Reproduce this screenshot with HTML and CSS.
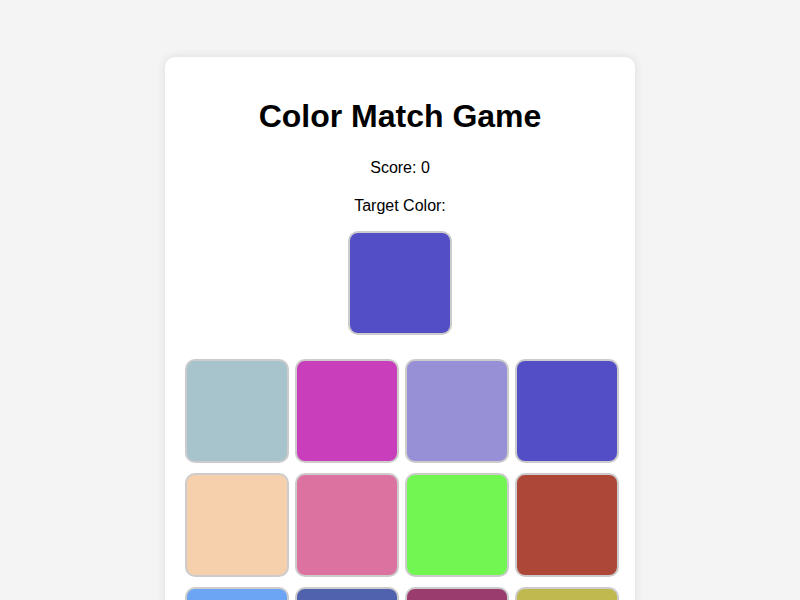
FILE: index.html
```html
<!DOCTYPE html>
<html lang="en">
<head>
    <meta charset="UTF-8">
    <meta name="viewport" content="width=device-width, initial-scale=1.0">
    <title>Color Match Game</title>
    <link rel="stylesheet" href="styles.css">
</head>
<body>
<div class="game">
    <h1>Color Match Game</h1>
    <p class="score">Score: <span id="score">0</span></p>
    <p class="label">Target Color:</p>
    <div class="target" style="background-color: #544ec6"></div>
    <div class="grid">
        <div class="tile" style="background-color: #a7c4cc"></div>
        <div class="tile" style="background-color: #c93fbb"></div>
        <div class="tile" style="background-color: #9890d6"></div>
        <div class="tile" style="background-color: #544ec6"></div>
        <div class="tile" style="background-color: #f6cfad"></div>
        <div class="tile" style="background-color: #dc72a0"></div>
        <div class="tile" style="background-color: #72f651"></div>
        <div class="tile" style="background-color: #ad4838"></div>
        <div class="tile" style="background-color: #6ca5f4"></div>
        <div class="tile" style="background-color: #5062ad"></div>
        <div class="tile" style="background-color: #9a3c6e"></div>
        <div class="tile" style="background-color: #bfb94f"></div>
    </div>
</div>
</body>
</html>
```

FILE: styles.css
```css
body {
    margin: 0;
    padding-top: 57px;
    background-color: #f4f4f4;
    font-family: 'Liberation Sans', Arial, sans-serif;
    display: flex;
    justify-content: center;
}

.game {
    width: 430px;
    padding: 20px;
    background-color: #fff;
    border-radius: 10px;
    box-shadow: 0 0 10px rgba(0, 0, 0, 0.1);
    text-align: center;
}

h1 {
    font-size: 32px;
    margin: 21px 0 24px;
}

p {
    font-size: 16px;
    margin: 0;
}

.score {
    margin-bottom: 20px;
}

.label {
    margin-bottom: 16px;
}

.target {
    width: 100px;
    height: 100px;
    margin: 0 auto 24px;
    border: 2px solid #ccc;
    border-radius: 10px;
}

.grid {
    display: grid;
    grid-template-columns: repeat(4, minmax(0, 1fr));
    gap: 10px;
}

.tile {
    width: 100px;
    height: 100px;
    border: 2px solid #ccc;
    border-radius: 10px;
    cursor: pointer;
}
```
